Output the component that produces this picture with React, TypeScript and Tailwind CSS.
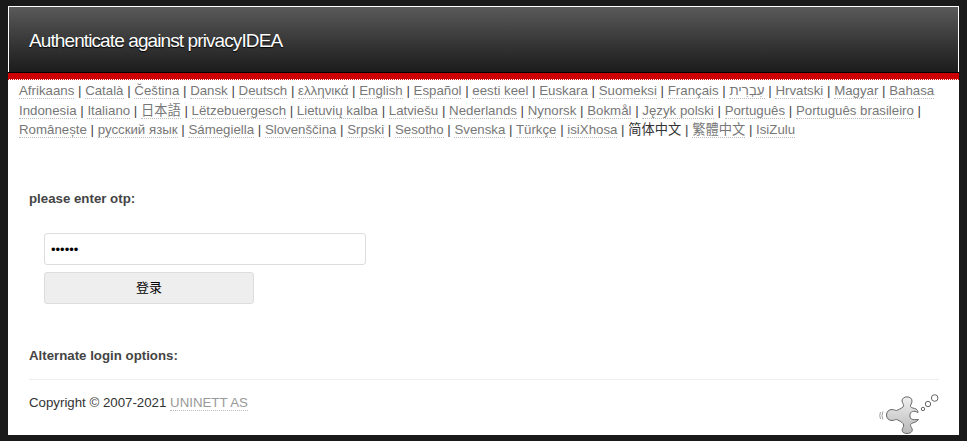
const langs: [string, boolean?][] = [
  ["Afrikaans"],["Català"],["Čeština"],["Dansk"],["Deutsch"],["ελληνικά"],["English"],["Español"],["eesti keel"],["Euskara"],["Suomeksi"],["Français"],["עִבְרִית"],["Hrvatski"],["Magyar"],["Bahasa Indonesia"],["Italiano"],["日本語"],["Lëtzebuergesch"],["Lietuvių kalba"],["Latviešu"],["Nederlands"],["Nynorsk"],["Bokmål"],["Język polski"],["Português"],["Português brasileiro"],["Românește"],["русский язык"],["Sámegiella"],["Slovenščina"],["Srpski"],["Sesotho"],["Svenska"],["Türkçe"],["isiXhosa"],["简体中文", true],["繁體中文"],["IsiZulu"],
];

export default function App() {
  return (
    <div className="h-[441px] w-[967px] overflow-hidden bg-[#1a1a1a] pt-[6px] pl-[8px] font-['Liberation_Sans','Noto_Sans_CJK_SC',sans-serif]">
      <div className="h-[429px] w-[951px] overflow-hidden bg-white">
        <div className="h-[66px] border-x border-t border-white bg-gradient-to-b from-[#5a5a5a] to-[#1c1c1c] pl-[20px] pt-[22px]">
          <h1 className="text-[19px] leading-[23px] tracking-[-0.9px] text-white [text-shadow:0_1px_1px_#000]">Authenticate against privacyIDEA</h1>
        </div>
        <div className="h-px bg-black" />
        <div className="h-[6px] bg-[#cc0000]" />
        <div className="border-t border-dotted border-[#cc0000]" />
        <div className="pl-[11px] pr-[20px] pt-[1px] text-[13.28px] leading-[19.7px] text-[#444]">
          {langs.map(([l, cur], i) => (
            <span key={l}>
              {cur ? <span className="text-[#333]">{l}</span> : <a className="border-b border-dotted border-[#bbb] text-[#777]">{l}</a>}
              {i < langs.length - 1 ? " | " : ""}
            </span>
          ))}
        </div>
        <div className="pl-[21px] pt-[51px] text-[13.28px] font-bold leading-[16px] text-[#444]">please enter otp:</div>
        <div className="flex flex-col items-start pl-[36px] pt-[26px]">
          <input type="password" readOnly value="123456" className="h-[32px] w-[322px] rounded-[3px] border border-[#ddd] bg-white px-[6px] text-[13px] text-black outline-none" />
          <button className="mt-[7px] h-[32px] w-[210px] rounded-[3px] border border-[#ddd] bg-[#eeeeee] text-[13px] text-black">登录</button>
        </div>
        <div className="pl-[21px] pt-[44px] text-[13.28px] font-bold leading-[16px] text-[#444]">Alternate login options:</div>
        <div className="ml-[21px] mr-[20px] mt-[15px] flex items-start justify-between border-t border-[#eeeeee] pt-[15px]">
          <div className="text-[13.28px] leading-[16px] text-[#333]">
            Copyright © 2007-2021 <a className="border-b border-dotted border-[#bbb] text-[#999]">UNINETT AS</a>
          </div>
          <svg width="60" height="42" viewBox="0 0 60 42" className="mt-[-3px] shrink-0">
            <defs>
              <linearGradient id="p" x1="0" y1="0" x2="0" y2="1">
                <stop offset="0" stopColor="#f0f0f0" />
                <stop offset="1" stopColor="#b8b8b8" />
              </linearGradient>
            </defs>
            <path d="M23 9C23 3.500 33 3.500 33 9C33 12 31 12.500 31.500 14.500C32 16 35 16 37 17C38.500 18 39 19 39 20.500C37 19.500 35 19 33.500 19.500C30.500 20.500 30 25 32.500 27C34 28 36 27.500 39.500 27.500C38 30 34.500 30.500 32.500 31.500C31 32.500 31.500 34 32.500 35.500C34.500 38.500 32.500 41.500 28 41.500C23.500 41.500 22 38.500 24 35.500C25 34 25 32 23 30.500C21 29 19 28 17.500 27.500C16 27.500 15 28.500 13 28.500C9.500 28.500 7.500 26 7.500 23C7.500 20 9.500 17.500 13 17.500C15 17.500 16 18.500 17.500 18.500C19 18 22 16.500 24 15C25 14 24.500 12.500 24 11.500C23.500 10.500 23 10 23 9Z" fill="url(#p)" stroke="#666" strokeWidth="1" />
            <path d="M1.500 20q-1.500 3.500 0 7M3.800 19.500q-1.500 4 0 8" fill="none" stroke="#888" strokeWidth=".8" />
            <circle cx="44" cy="17" r="1.700" fill="#fff" stroke="#666" />
            <circle cx="49" cy="12" r="2.700" fill="#fff" stroke="#666" />
            <circle cx="55.700" cy="6" r="3.300" fill="#fff" stroke="#666" />
          </svg>
        </div>
      </div>
    </div>
  );
}
